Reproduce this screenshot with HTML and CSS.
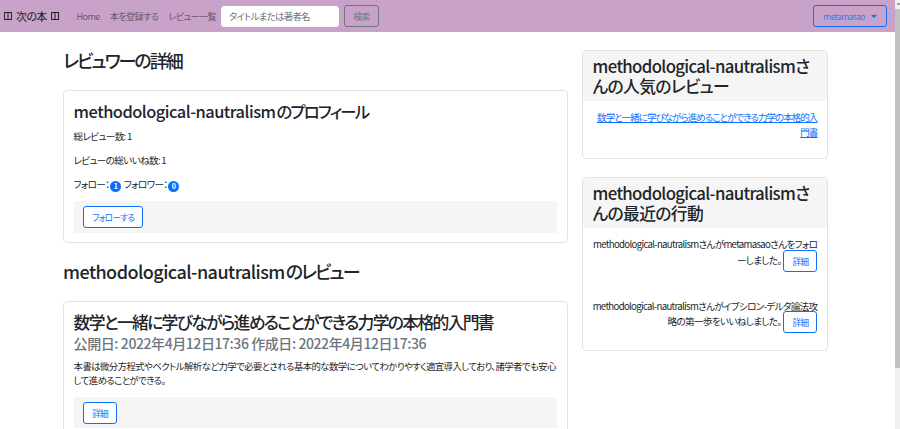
FILE: index.html
```html
<!DOCTYPE html>
<html lang="ja">
<head>
<meta charset="utf-8">
<title>レビュワーの詳細</title>
<link rel="stylesheet" href="styles.css">
</head>
<body>
<div class="viewport">
  <div class="page">
    <nav class="navbar">
      <a class="brand" href="#"><svg class="tofu" viewBox="0 0 8 8" width="8" height="8"><rect x="0.5" y="0.5" width="7" height="7" fill="none" stroke="#222" stroke-width="1"/><line x1="4" y1="1" x2="4" y2="7" stroke="#222" stroke-width="1"/></svg> 次の本 <svg class="tofu" viewBox="0 0 8 8" width="8" height="8"><rect x="0.5" y="0.5" width="7" height="7" fill="none" stroke="#222" stroke-width="1"/><line x1="4" y1="1" x2="4" y2="7" stroke="#222" stroke-width="1"/></svg></a>
      <ul class="nav-links">
        <li><a href="#">Home</a></li>
        <li><a href="#">本を登録する</a></li>
        <li><a href="#">レビュー一覧</a></li>
      </ul>
      <form class="search">
        <input class="search-input" type="text" placeholder="タイトルまたは著者名">
        <button class="btn btn-secondary-outline" type="button">検索</button>
      </form>
      <button class="btn btn-primary-outline user-menu" type="button">metamasao <span class="caret"></span></button>
    </nav>
    <main class="main">
      <div class="left-col">
        <h2 class="section-title">レビュワーの詳細</h2>
        <div class="card">
          <div class="card-body">
            <h3 class="card-title"><span class="en">methodological-nautralism</span>のプロフィール</h3>
            <p class="text">総レビュー数: 1</p>
            <p class="text">レビューの総いいね数: 1</p>
            <p class="text">フォロー：<span class="badge">1</span> フォロワー：<span class="badge">0</span></p>
            <div class="card-footer">
              <button class="btn btn-primary-outline" type="button">フォローする</button>
            </div>
          </div>
        </div>
        <h2 class="section-title"><span class="en">methodological-nautralism</span>のレビュー</h2>
        <div class="card">
          <div class="card-body">
            <h3 class="card-title review-title">数学と一緒に学びながら進めることができる力学の本格的入門書</h3>
            <h4 class="review-date">公開日: 2022年4月12日17:36 作成日: 2022年4月12日17:36</h4>
            <p class="text review-text">本書は微分方程式やベクトル解析など力学で必要とされる基本的な数学についてわかりやすく適宜導入しており、諸学者でも安心して進めることができる。</p>
            <div class="card-footer">
              <button class="btn btn-primary-outline" type="button">詳細</button>
            </div>
          </div>
        </div>
      </div>
      <aside class="right-col">
        <div class="card side-card">
          <div class="card-header">
            <h3 class="card-title side-title">methodological-nautralismさんの人気のレビュー</h3>
          </div>
          <div class="card-body side-body">
            <p class="text"><a class="link" href="#">数学と一緒に学びながら進めることができる力学の本格的入門書</a></p>
          </div>
        </div>
        <div class="card side-card">
          <div class="card-header">
            <h3 class="card-title side-title">methodological-nautralismさんの最近の行動</h3>
          </div>
          <div class="card-body side-body">
            <p class="text activity">methodological-nautralismさんがmetamasaoさんをフォローしました。<button class="btn btn-primary-outline" type="button">詳細</button></p>
            <p class="text activity">methodological-nautralismさんがイプシロン-デルタ論法攻略の第一歩をいいねしました。<button class="btn btn-primary-outline" type="button">詳細</button></p>
          </div>
        </div>
      </aside>
    </main>
  </div>
  <div class="scrollbar">
    <div class="sb-arrow"><span class="sb-arrow-mark"></span></div>
    <div class="sb-thumb"></div>
    <div class="sb-track"></div>
  </div>
</div>
</body>
</html>
```
FILE: styles.css
```css
* { box-sizing: border-box; }
html, body {
  margin: 0;
  padding: 0;
  height: 100%;
  overflow: hidden;
}
body {
  font-family: "Noto Sans CJK JP", "Noto Sans", sans-serif;
  font-feature-settings: "palt" 1;
  font-size: 9.6px;
  line-height: 1.5;
  letter-spacing: -0.07em;
  color: #212529;
  background: #fff;
}
.viewport {
  display: flex;
  height: 429px;
}
.page {
  flex: 1;
  min-width: 0;
}
.navbar {
  display: flex;
  align-items: center;
  height: 32px;
  background: #c8a2c8;
  padding: 0 8px 0 4px;
}
.brand {
  display: flex;
  align-items: center;
  gap: 4px;
  font-size: 11px;
  color: #222;
  text-decoration: none;
  margin-right: 18px;
}
.tofu { display: block; }
.nav-links {
  display: flex;
  gap: 10px;
  list-style: none;
  margin: 0;
  padding: 0;
}
.nav-links a {
  color: rgba(0,0,0,.5);
  text-decoration: none;
  font-size: 9.2px;
}
.search {
  display: flex;
  align-items: center;
  gap: 5px;
  margin-left: 5px;
}
.search-input {
  width: 118px;
  height: 21px;
  border: 1px solid #fff;
  border-radius: 3px;
  background: #fff;
  padding: 0 7px;
  font-family: inherit;
  font-size: 9.4px;
  letter-spacing: inherit;
  font-feature-settings: "palt" 1;
}
.search-input::placeholder { color: #6c757d; }
.btn {
  font-family: inherit;
  font-feature-settings: "palt" 1;
  letter-spacing: inherit;
  font-size: 8.6px;
  line-height: 14px;
  padding: 3px 8px;
  height: 22px;
  border-radius: 3px;
  background: transparent;
  cursor: pointer;
}
.btn-secondary-outline {
  border: 1px solid #6c757d;
  color: #6c757d;
  background: transparent;
  width: 35px;
  padding: 3px 0;
}
.btn-primary-outline {
  border: 1px solid #0d6efd;
  color: #0d6efd;
  background: #fff;
}
.user-menu {
  margin-left: auto;
  background: transparent;
  color: #2f7cf6;
  width: 74px;
  padding: 3px 0;
  display: flex;
  align-items: center;
  justify-content: center;
  gap: 6px;
}
.caret {
  width: 0;
  height: 0;
  border-left: 3px solid transparent;
  border-right: 3px solid transparent;
  border-top: 3px solid #0d6efd;
}
.main {
  display: grid;
  grid-template-columns: 505px 246px;
  column-gap: 14px;
  padding-left: 63px;
  align-items: start;
}
.section-title {
  font-size: 18px;
  line-height: 23px;
  font-weight: 500;
  letter-spacing: -0.11em;
  margin: 17px 0 18px;
}
.en {
  letter-spacing: -0.03em;
  padding-right: 1px;
}
.card {
  border: 1px solid #e2e2e2;
  border-radius: 4px;
  background: #fff;
}
.card-body {
  padding: 9.6px;
}
.card-title {
  font-size: 16.4px;
  line-height: 20px;
  font-weight: 500;
  letter-spacing: -0.11em;
  margin: 0 0 8px;
}
.text {
  margin: 0 0 9.6px;
}
.badge {
  display: inline-flex;
  align-items: center;
  justify-content: center;
  min-width: 11px;
  height: 11px;
  padding: 0 3px;
  margin: 0 1px;
  border-radius: 6px;
  background: #0d6efd;
  color: #fff;
  font-size: 7px;
  font-weight: 700;
  letter-spacing: 0;
  line-height: 1;
  vertical-align: -1px;
}
.card-footer {
  background: #f5f5f5;
  padding: 4.8px 9.6px;
}
.review-title {
  font-size: 16.8px;
  letter-spacing: -0.1em;
  line-height: 21px;
  margin: 0;
}
.review-date {
  font-size: 14px;
  line-height: 20px;
  font-weight: 500;
  letter-spacing: -0.03em;
  color: #6c757d;
  margin: 0 0 6px;
}
.review-text {
  font-size: 9.4px;
  letter-spacing: -0.06em;
}
.right-col {
  padding-top: 18px;
  display: flex;
  flex-direction: column;
  gap: 18px;
}
.card-header {
  background: #f5f5f5;
  padding: 4.8px 9.6px;
}
.side-title {
  font-size: 16.8px;
  letter-spacing: -0.04em;
  margin: 0;
}
.side-body {
  text-align: right;
}
.link {
  color: #0d6efd;
  text-decoration: underline;
  font-size: 9.5px;
  letter-spacing: -0.1em;
}
.activity {
  margin-bottom: 29px;
}
.activity:last-child {
  margin-bottom: 9.6px;
}
.activity .btn {
  margin: -2px 0 -2px 2px;
  width: 34px;
  padding: 3px 0;
  vertical-align: middle;
}
.scrollbar {
  width: 5px;
  display: flex;
  flex-direction: column;
  background: #f1f1f1;
}
.sb-arrow {
  height: 9px;
  position: relative;
  background: #f1f1f1;
}
.sb-arrow-mark {
  position: absolute;
  left: 2px;
  top: 3px;
  width: 3px;
  height: 2px;
  background: #a3a3a3;
}
.sb-thumb {
  height: 359px;
  background: #c1c1c1;
}
.sb-track {
  flex: 1;
  background: #f1f1f1;
}
```
